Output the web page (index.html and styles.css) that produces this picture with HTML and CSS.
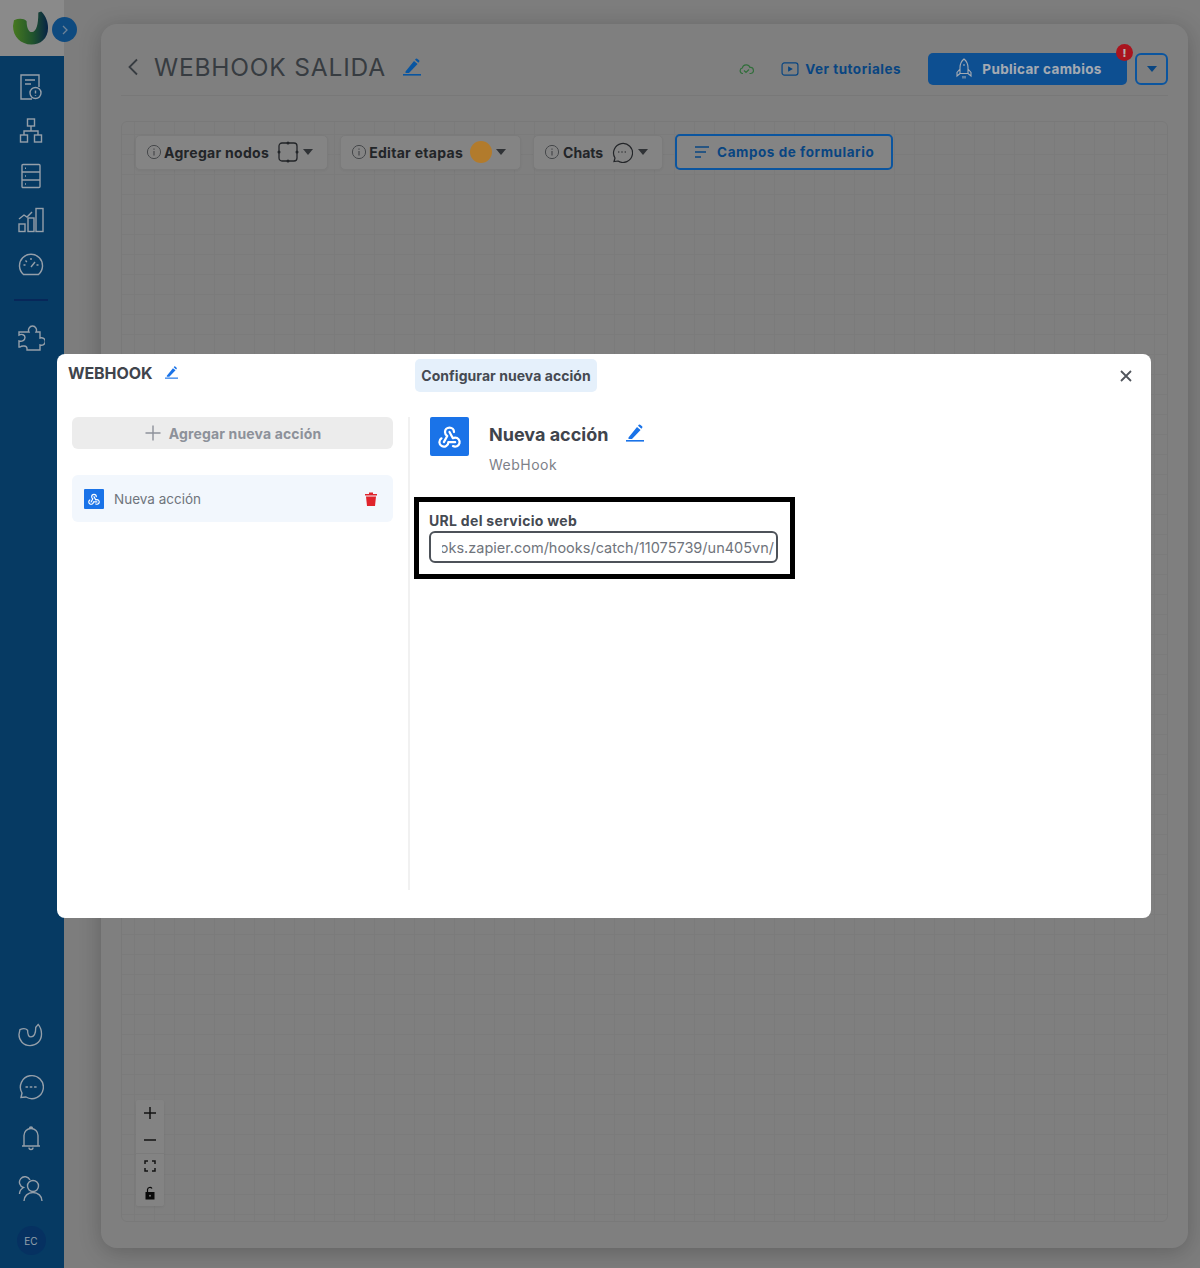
FILE: index.html
```html
<!DOCTYPE html>
<html lang="es">
<head>
<meta charset="utf-8">
<title>Webhook salida</title>
<link rel="stylesheet" href="styles.css">
</head>
<body>
<svg class="defs" width="0" height="0" aria-hidden="true">
  <symbol id="pen" viewBox="0 0 18 18"><path d="M2.500 13.500 11 3l3.600 3L6 15H2.500zM12 1.800l.8-1a1 1 0 0 1 1.400-.1l1.900 1.600a1 1 0 0 1 .1 1.400l-.8 1z" fill="currentColor"/><rect x="0" y="16" width="18" height="1.600" fill="currentColor"/></symbol>
  <symbol id="info" viewBox="0 0 16 16"><circle cx="8" cy="8" r="6.600" fill="none" stroke="currentColor" stroke-width="1"/><path d="M8 7v4.600M8 4.400v1.300" stroke="currentColor" stroke-width="1.200" fill="none"/></symbol>
  <symbol id="hook" viewBox="0 0 24 24"><g fill="none" stroke="currentColor" stroke-width="2" stroke-linecap="round" stroke-linejoin="round"><path d="M4.876 13.610a4 4 0 1 0 6.124 3.390h6"/><path d="M15.066 20.502a4 4 0 1 0 1.934-7.502c-.706 0-1.424.179-2 .5l-3-5.500"/><path d="M16 8a4 4 0 1 0-8 0c0 1.506.77 2.818 2 3.500l-3 5.500"/></g></symbol>
</svg>
<div class="app">
  <aside class="rail">
    <div class="brand">
      <svg class="logo" width="37" height="36" viewBox="0 0 38 36"><defs><linearGradient id="lg" x1="0" x2="1" y1="0" y2="0"><stop offset="0" stop-color="#66ad2d"/><stop offset=".55" stop-color="#2f7a40"/><stop offset="1" stop-color="#0b3264"/></linearGradient></defs><path d="M1 10 C6 8 11 8 14 11 C14 19 17 23 20 22 C24 21 26 15 26 2 L29 1 C34 6 36 12 36 18 C36 29 28 35 19 35 C8 35 0 27 0 16 Z" fill="url(#lg)"/></svg>
      <span class="toggle"><svg width="8" height="10" viewBox="0 0 8 10"><path d="M2 1l4 4-4 4" fill="none" stroke="#9cbbd9" stroke-width="1.300"/></svg></span>
    </div>
    <nav class="rail-body">
      <div class="rail-top">
        <svg class="ri" width="24" height="26" viewBox="0 0 24 26"><path d="M13 25H2V1h18v12M6 6h10M6 10h6" /><circle cx="16.500" cy="19" r="5.500"/><path d="M16.500 16.500v3M16.500 21v.8"/></svg>
        <svg class="ri" width="24" height="26" viewBox="0 0 24 26"><rect x="8.500" y="1" width="7" height="7"/><rect x="1.500" y="17" width="7" height="7"/><rect x="15.500" y="17" width="7" height="7"/><path d="M12 8v5M5 17v-4h14v4"/></svg>
        <svg class="ri" width="22" height="26" viewBox="0 0 22 26"><rect x="2" y="1.500" width="18" height="23" rx="1"/><path d="M2 9h18M2 17h18M5 5.200h1M5 13h1M5 21h1"/></svg>
        <svg class="ri" width="26" height="26" viewBox="0 0 26 26"><rect x="1" y="17" width="6" height="7.500"/><rect x="10" y="11" width="6" height="13.500"/><rect x="18" y="1.500" width="7" height="23"/><path d="M1 12l5-4 3 2 5-5"/></svg>
        <svg class="ri" width="26" height="26" viewBox="0 0 26 26"><path d="M5.500 23.500A11.500 11.500 0 1 1 20.500 23.500Z"/><path d="M13 16l4-5M13 7v2M5.500 14h2M20.500 14h-2M7.500 9.500l1.400 1.400"/></svg>
        <span class="rule"></span>
        <svg class="ri" width="28" height="28" viewBox="0 0 28 28"><path d="M7 7h5a4 4 0 1 1 7 0h4v6a3.800 3.800 0 1 1 0 7v5H10v-1.500c0-3-5-3-7-1.500H2v-6c3 1 6-1 6-3.500S5 8.500 2 10V7z"/></svg>
      </div>
      <div class="rail-bottom">
        <svg class="ri" width="26" height="26" viewBox="0 0 26 26"><path d="M2 7c3-1.500 6-1.500 8 .5 0 4 1 7 3.500 7 3 0 5-3 5-10 1-1 1.500-2 2.500-3 2.500 3 3.500 6 3.500 10 0 7-5 12-12 12S1 18 1 12Z" transform="scale(.96)"/></svg>
        <svg class="ri" width="26" height="26" viewBox="0 0 26 26"><path d="M3 23.500l1-4.500A11.500 11.500 0 1 1 8 23Z"/><path d="M8 13h1.500M12.300 13h1.500M16.600 13h1.500" stroke-linecap="round"/></svg>
        <svg class="ri" width="20" height="26" viewBox="0 0 20 26"><path d="M1 21h18M3 21V10.500a7 7 0 0 1 14 0V21M8.500 3.500a1.500 1.500 0 0 1 3 0M8 22.500a2 2 0 0 0 4 0"/></svg>
        <svg class="ri" width="26" height="26" viewBox="0 0 26 26"><path d="M1.500 18c0-3 1.500-5 4-6.500A5.500 5.500 0 1 1 12 4"/><circle cx="15" cy="10" r="5.500"/><path d="M6 25c0-5 4-8.500 9-8.500s9 3.500 9 8.500"/></svg>
        <span class="avatar">EC</span>
      </div>
    </nav>
  </aside>

  <main class="page">
    <section class="card">
      <header class="head">
        <div class="head-left">
          <svg width="12" height="18" viewBox="0 0 12 18"><path d="M10 1.500 2.500 9l7.500 7.500" fill="none" stroke="#4f565d" stroke-width="1.800"/></svg>
          <h1 class="title">WEBHOOK SALIDA</h1>
          <svg class="pen" width="18" height="18"><use href="#pen"/></svg>
        </div>
        <div class="head-right">
          <svg class="cloud" width="15" height="12" viewBox="0 0 15 12"><path d="M4 10.500H3.500a2.800 2.800 0 0 1-.2-5.500A4 4 0 0 1 11 4.500a3 3 0 0 1 .8 6H10.500M5 7.500l2 2 3-3" fill="none" stroke="#479e55" stroke-width="1.200"/></svg>
          <a class="tut"><svg width="18" height="14" viewBox="0 0 19 15"><rect x="1" y="1" width="17" height="13" rx="2.500" fill="none" stroke="#0e64b9" stroke-width="1.300"/><path d="M7.500 4.500l5 3-5 3z" fill="#0e64b9"/></svg>Ver tutoriales</a>
          <div class="publish-wrap">
            <button class="publish"><svg width="18" height="22" viewBox="0 0 18 22"><path d="M9 1c3 2.500 4 5.500 4 8.500v6H5v-6C5 6.500 6 3.500 9 1ZM5 11l-3 3.500V18l3-2.500M13 11l3 3.500V18l-3-2.500M8 18v2.500M10 18v2.500M9 6v2" fill="none" stroke="#ebf4ff" stroke-width="1.100"/></svg>Publicar cambios</button>
            <span class="alert">!</span>
          </div>
          <button class="caret-btn"><span class="caret blue"></span></button>
        </div>
      </header>

      <div class="canvas">
        <div class="tools">
          <div class="tool t1"><svg class="info" width="16" height="16"><use href="#info"/></svg><b>Agregar nodos</b><svg class="tool-icon" width="22" height="22" viewBox="0 0 22 22"><rect x="2" y="2" width="18" height="18" rx="3" fill="none" stroke="#32353a" stroke-width="1.300"/><circle cx="11" cy="2" r="1.500" fill="#32353a"/><circle cx="11" cy="20" r="1.500" fill="#32353a"/><circle cx="2" cy="11" r="1.500" fill="#32353a"/><circle cx="20" cy="11" r="1.500" fill="#32353a"/></svg><span class="caret"></span></div>
          <div class="tool t2"><svg class="info" width="16" height="16"><use href="#info"/></svg><b>Editar etapas</b><span class="dot"></span><span class="caret"></span></div>
          <div class="tool t3"><svg class="info" width="16" height="16"><use href="#info"/></svg><b>Chats</b><svg class="tool-icon" width="22" height="22" viewBox="0 0 22 22"><path d="M3 20.500l1-3.500A9.500 9.500 0 1 1 7 20Z" fill="none" stroke="#32353a" stroke-width="1.200"/><path d="M7 11h1.400M10.300 11h1.400M13.600 11H15" stroke="#32353a" stroke-width="1.200"/></svg><span class="caret"></span></div>
          <button class="fields"><svg width="16" height="14" viewBox="0 0 16 14"><path d="M1 2h14M1 7h11M1 12h6" stroke="#0e64b9" stroke-width="1.500"/></svg>Campos de formulario</button>
        </div>
        <div class="zoom-box">
          <div class="zoom-sec">
            <svg width="14" height="14" viewBox="0 0 14 14"><path d="M7 1v12M1 7h12" stroke="#1c1c1c" stroke-width="1.500"/></svg>
            <svg width="14" height="14" viewBox="0 0 14 14"><path d="M1 7h12" stroke="#1c1c1c" stroke-width="1.500"/></svg>
          </div>
          <div class="zoom-sec">
            <svg width="12" height="12" viewBox="0 0 12 12"><path d="M1 4V1h3M8 1h3v3M11 8v3H8M4 11H1V8" fill="none" stroke="#1c1c1c" stroke-width="1.500"/></svg>
            <svg width="12" height="14" viewBox="0 0 12 14"><rect x="1.500" y="6" width="9" height="7.500" fill="#0d0d0d"/><path d="M3.500 6V3.500a2.500 2.500 0 0 1 4.500-1" fill="none" stroke="#0d0d0d" stroke-width="1.200"/><circle cx="6" cy="9.700" r="1" fill="#aaa"/></svg>
          </div>
        </div>
      </div>
    </section>
  </main>
</div>

<div class="scrim"></div>

<div class="modal" role="dialog">
  <div class="modal-side">
    <div class="modal-name"><strong>WEBHOOK</strong><svg class="pen blue" width="13" height="13"><use href="#pen"/></svg></div>
    <button class="add"><svg width="16" height="16" viewBox="0 0 16 16"><path d="M8 .5v15M.5 8h15" stroke="#8d919a" stroke-width="1.400"/></svg>Agregar nueva acción</button>
    <div class="action">
      <span class="mini"><svg width="14" height="14"><use href="#hook"/></svg></span>
      <span class="action-name">Nueva acción</span>
      <svg class="trash" width="12" height="14" viewBox="0 0 12 14"><path d="M0 2h12v1.500H0zM4 .5h4V2H4zM1 4.500h10L10 14H2z" fill="#e0242c"/></svg>
    </div>
  </div>
  <div class="modal-main">
    <div class="tabbar">
      <span class="tab">Configurar nueva acción</span>
      <svg class="close" width="12" height="12" viewBox="0 0 12 12"><path d="M1 1l10 10M11 1 1 11" stroke="#50555c" stroke-width="1.800"/></svg>
    </div>
    <div class="detail">
      <div class="detail-head">
        <span class="big-icon"><svg width="27" height="27"><use href="#hook"/></svg></span>
        <div class="detail-text">
          <div class="detail-title"><h2>Nueva acción</h2><svg class="pen blue" width="18" height="18"><use href="#pen"/></svg></div>
          <p>WebHook</p>
        </div>
      </div>
      <div class="callout">
        <label>URL del servicio web</label>
        <div class="input"><div class="input-clip"><span>https://hooks.zapier.com/hooks/catch/11075739/un405vn/</span></div></div>
      </div>
    </div>
  </div>
</div>
</body>
</html>
```
FILE: styles.css
```css
* { box-sizing: border-box; }
html, body { margin: 0; height: 100%; }
body { width: 1200px; height: 1268px; position: relative; overflow: hidden; font-family: Inter, "Liberation Sans", sans-serif; background: #fff; }
.defs { position: absolute; }
button { font-family: inherit; }

.app { display: flex; height: 1268px; background: #b3b3b3; }
.rail { width: 64px; flex: none; display: flex; flex-direction: column; position: relative; }
.brand { height: 56px; display: flex; position: relative; padding: 10px 0 0 13px; background: #c6c6c6; }
.logo { flex: none; }
.toggle { position: absolute; left: 52px; top: 17px; width: 25px; height: 25px; border-radius: 50%; background: #156ab7; display: flex; align-items: center; justify-content: center; }
.rail-body { flex: 1; background: #09538f; display: flex; flex-direction: column; justify-content: space-between; align-items: center; padding: 18px 2px 13px 0; }
.rail-top, .rail-bottom { display: flex; flex-direction: column; align-items: center; }
.rail-top { gap: 18.250px; }
.rail-bottom { gap: 25px; }
.ri { fill: none; stroke: #d6e4f2; stroke-width: 1.400; display: block; }
.rule { width: 34px; height: 2px; background: #0b3980; margin: 4px 0 5px; }
.avatar { width: 29px; height: 29px; margin-top: -1px; border-radius: 50%; background: #09478c; color: #d6e4f2; font-size: 10px; display: flex; align-items: center; justify-content: center; }

.page { flex: 1; padding: 24px 12px 20px 37px; }
.card { height: 100%; background: #b7b7b7; border-radius: 16px; padding: 0 20px 26px; display: flex; flex-direction: column; box-shadow: 0 4px 22px rgba(0,0,0,.22); }
.head { height: 72px; padding-top: 17px; flex: none; display: flex; justify-content: space-between; align-items: center; border-bottom: 1px solid #adadad; }
.head-left { display: flex; align-items: center; padding: 0 0 2px 6px; }
.title { margin: 0 17px 0 15px; font-size: 24.500px; font-weight: 400; letter-spacing: .8px; color: #4f565d; line-height: 30px; }
.pen { color: #0e7ae5; display: block; }
.pen.blue { color: #1a73e8; }
.head-right { display: flex; align-items: center; margin-top: 2px; }
.cloud { margin-right: 27px; }
.tut { display: flex; align-items: center; gap: 6px; color: #0e64b9; font-size: 13.500px; letter-spacing: .5px; font-weight: 700; margin-right: 27px; }
.publish-wrap { position: relative; margin-right: 8px; }
.publish { width: 199px; height: 32px; background: #1471d0; border: 0; border-radius: 5px; color: #ebf4ff; font-size: 13.500px; letter-spacing: .35px; font-weight: 700; display: flex; align-items: center; justify-content: center; gap: 9px; padding: 0 0 0 2px; }
.alert { position: absolute; right: -6px; top: -9px; width: 17px; height: 17px; border-radius: 50%; background: #f31d2b; color: #fff; font-size: 11px; font-weight: 800; display: flex; align-items: center; justify-content: center; }
.caret-btn { width: 33px; height: 32px; background: transparent; border: 2px solid #117ae4; border-radius: 6px; display: flex; align-items: center; justify-content: center; padding: 0; }
.caret { width: 0; height: 0; border: 5.500px solid transparent; border-top: 6px solid #45494e; border-bottom: 0; display: block; flex: none; }
.caret.blue { border-top-color: #0e64b9; }

.canvas { flex: 1; margin-top: 25px; border: 1px solid #aeaeae; border-radius: 6px; position: relative; padding: 12px 13px 13px; background-image: linear-gradient(#b1b1b1 1px, transparent 1px), linear-gradient(90deg, #b1b1b1 1px, transparent 1px); background-size: 20px 20px; background-position: 12px 12px; }
.tools { display: flex; gap: 12px; align-items: center; }
.tool { height: 35px; display: flex; align-items: center; padding: 0 14px 0 10px; background: #bebebe; border: 1px solid #b0b0b0; border-radius: 5px; box-shadow: 0 1px 3px rgba(0,0,0,.06); font-size: 14px; letter-spacing: .3px; color: #32353a; }
.tool b { font-weight: 700; margin-left: 2px; }
.info { color: #64676b; flex: none; }
.t1 .tool-icon { margin: 0 4px 0 8px; }
.t3 b { margin-left: 3px; letter-spacing: 0; }
.t3 .tool-icon { margin: 0 5px 0 8px; }
.dot { width: 22px; height: 22px; border-radius: 50%; background: #ffb040; margin: 0 4px 0 7px; }
.fields { height: 36px; width: 218px; border: 2px solid #117ae4; border-radius: 5px; background: #bebebe; color: #0e64b9; font-weight: 700; font-size: 13.500px; letter-spacing: .55px; display: flex; align-items: center; justify-content: center; gap: 7px; padding: 0; }
.zoom-box { position: absolute; left: 14px; bottom: 15px; width: 28px; background: #bcbcbc; box-shadow: 0 1px 3px rgba(0,0,0,.08); display: flex; flex-direction: column; border-radius: 2px; }
.zoom-sec { display: flex; flex-direction: column; align-items: center; padding: 6px 0; gap: 13px; }
.zoom-sec + .zoom-sec { border-top: 1px solid #b0b0b0; gap: 14px; padding: 6px 0; }

.scrim { position: absolute; inset: 0; background: rgba(0,0,0,.3); }

.modal { position: absolute; left: 57px; top: 354px; width: 1094px; height: 564px; background: #fff; border-radius: 8px; display: flex; }
.modal-side { width: 351px; flex: none; padding: 0 0 0 11px; display: flex; flex-direction: column; }
.modal-name { display: flex; align-items: center; gap: 13px; height: 38px; padding-bottom: 1px; }
.modal-name strong { font-size: 16px; font-weight: 700; color: #3f444c; letter-spacing: -.1px; }
.add { margin: 25px 0 0 4px; width: 321px; height: 32px; border: 0; border-radius: 6px; background: #ececec; color: #8d919a; font-weight: 700; font-size: 14px; letter-spacing: .15px; display: flex; align-items: center; justify-content: center; gap: 8px; padding: 0 0 0 1px; }
.action { margin: 26px 0 0 4px; width: 321px; height: 47px; background: #f2f7fd; border-radius: 6px; display: flex; align-items: center; padding: 0 16px 0 12px; }
.mini { width: 20px; height: 20px; background: #1a73e8; color: #fff; display: flex; align-items: center; justify-content: center; border-radius: 1px; }
.action-name { margin-left: 10px; flex: 1; font-size: 13.500px; color: #6f747c; }
.trash { display: block; }

.modal-main { flex: 1; display: flex; flex-direction: column; position: relative; }
.tabbar { height: 63px; flex: none; padding: 5px 19px 0 7px; display: flex; justify-content: space-between; align-items: flex-start; }
.tab { height: 33px; width: 182px; background: #e5f0fb; border-radius: 5px; color: #454a52; font-weight: 700; font-size: 14px; letter-spacing: .05px; display: flex; align-items: center; justify-content: center; }
.close { margin: 11px 0 0; }
.detail { margin-bottom: 28px; flex: 1; border-left: 2px solid #f1f1f1; padding: 0 0 0 4px; }
.detail-head { display: flex; margin-left: 16px; }
.big-icon { width: 39px; height: 39px; background: #1a73e8; color: #fff; border-radius: 2px; display: flex; align-items: center; justify-content: center; flex: none; }
.detail-text { margin-left: 20px; }
.detail-title { display: flex; align-items: center; gap: 18px; height: 34px; }
.detail-title h2 { margin: 0; font-size: 18px; font-weight: 700; color: #3f444c; }
.detail-title .pen { margin-top: -2px; }
.detail-text p { margin: 3px 0 0; font-size: 14px; letter-spacing: .5px; color: #7d8189; line-height: 21px; }
.callout { margin-top: 22px; width: 381px; height: 82px; border: 5px solid #000; padding: 10px 11px 0 10px; }
.callout label { display: block; font-size: 14px; letter-spacing: .3px; line-height: 17px; font-weight: 700; color: #454a52; }
.input { margin-top: 2px; height: 32px; width: 349px; border: 2px solid #4d5259; border-radius: 6px; padding: 0 2px 0 11px; display: flex; align-items: center; font-size: 14.500px; color: #6f747c; white-space: nowrap; }
.input-clip { flex: 1; min-width: 0; overflow: hidden; display: flex; justify-content: flex-end; }
.input-clip span { display: block; flex: none; }
```
